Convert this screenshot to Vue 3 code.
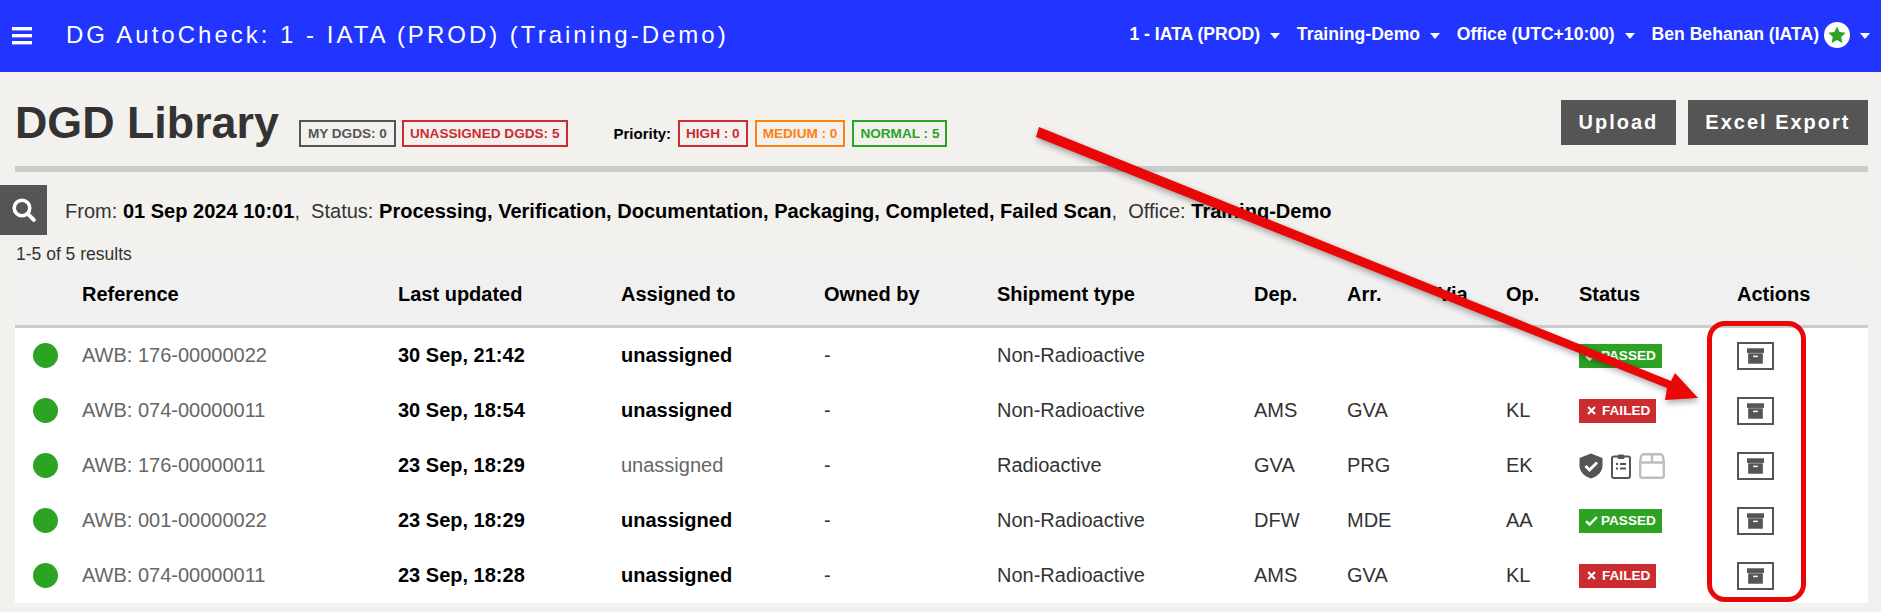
<template>
  <div class="page">
    <header class="topbar">
      <div class="topbar-left">
        <svg class="burger" viewBox="0 0 20 18" width="20" height="18">
          <rect y="0" width="20" height="3.4" fill="#fff" />
          <rect y="7" width="20" height="3.4" fill="#fff" />
          <rect y="14" width="20" height="3.4" fill="#fff" />
        </svg>
        <span class="app-title">DG AutoCheck: 1 - IATA (PROD) (Training-Demo)</span>
      </div>
      <nav class="topnav">
        <span class="nav-item">1 - IATA (PROD)<i class="caret"></i></span>
        <span class="nav-item">Training-Demo<i class="caret"></i></span>
        <span class="nav-item">Office (UTC+10:00)<i class="caret"></i></span>
        <span class="nav-item user">
          Ben Behanan (IATA)
          <svg class="star" viewBox="0 0 26 26" width="26" height="26">
            <circle cx="13" cy="13" r="13" fill="#fff" />
            <path d="M13 4.500l2.600 5.600 6.100.7-4.500 4.200 1.200 6-5.400-3-5.400 3 1.200-6-4.500-4.200 6.100-.7z" fill="#2ca323" />
          </svg>
          <i class="caret"></i>
        </span>
      </nav>
    </header>

    <section class="title-row">
      <div class="title-left">
        <h1>DGD Library</h1>
        <div class="tags">
          <span class="tag grey">MY DGDS: 0</span>
          <span class="tag red">UNASSIGNED DGDS: 5</span>
        </div>
        <div class="tags priority">
          <span class="priority-label">Priority:</span>
          <span class="tag red">HIGH : 0</span>
          <span class="tag orange">MEDIUM : 0</span>
          <span class="tag green">NORMAL : 5</span>
        </div>
      </div>
      <div class="buttons">
        <button class="btn">Upload</button>
        <button class="btn">Excel Export</button>
      </div>
    </section>

    <div class="rule"></div>

    <section class="filter-row">
      <button class="search-btn">
        <svg viewBox="0 0 24 24" width="24" height="24">
          <circle cx="10" cy="10" r="7.800" fill="none" stroke="#fff" stroke-width="3.600" />
          <path d="M15.800 15.800l6 6" stroke="#fff" stroke-width="4" stroke-linecap="round" />
        </svg>
      </button>
      <p class="filters">
        From: <b>01 Sep 2024 10:01</b>,&nbsp; Status: <b>Processing, Verification, Documentation, Packaging, Completed, Failed Scan</b>,&nbsp; Office: <b>Training-Demo</b>
      </p>
    </section>

    <div class="results">1-5 of 5 results</div>

    <table class="dgd-table">
      <colgroup>
        <col v-for="w in colWidths" :key="w.id" :style="{ width: w.px + 'px' }" />
      </colgroup>
      <thead>
        <tr>
          <th></th>
          <th v-for="h in headers" :key="h">{{ h }}</th>
        </tr>
      </thead>
      <tbody>
        <tr v-for="row in rows" :key="row.id">
          <td><span class="dot"></span></td>
          <td class="ref">{{ row.ref }}</td>
          <td><b>{{ row.updated }}</b></td>
          <td>
            <b v-if="row.bold">unassigned</b>
            <span v-else class="muted">unassigned</span>
          </td>
          <td>-</td>
          <td>{{ row.type }}</td>
          <td>{{ row.dep }}</td>
          <td>{{ row.arr }}</td>
          <td></td>
          <td>{{ row.op }}</td>
          <td>
            <span v-if="row.status === 'passed'" class="badge passed">
              <svg viewBox="0 0 12 12" width="13" height="13"><path d="M1 6.500l3.200 3.200L11 2.800" fill="none" stroke="#fff" stroke-width="2.200" /></svg>
              PASSED
            </span>
            <span v-else-if="row.status === 'failed'" class="badge failed">
              <svg viewBox="0 0 10 10" width="9" height="9"><path d="M1.200 1.200l7.600 7.600M8.800 1.200L1.200 8.800" fill="none" stroke="#fff" stroke-width="2.400" /></svg>
              FAILED
            </span>
            <span v-else class="progress">
              <svg viewBox="0 0 24 26" width="24" height="26">
                <path d="M12 0.500L23.500 5v7.500c0 6-4.600 10.800-11.500 13C5.100 23.300.5 18.500.5 12.500V5z" fill="#555" />
                <path d="M6.500 13l4 4 7.500-7.500" fill="none" stroke="#fff" stroke-width="3" />
              </svg>
              <svg viewBox="0 0 20 26" width="20" height="26">
                <rect x="1" y="3.500" width="18" height="21.500" rx="2" fill="none" stroke="#555" stroke-width="2" />
                <rect x="6.500" y="1.500" width="7" height="4.500" rx="1.500" fill="#555" />
                <path d="M5 11h2M9 11h6M5 15.500h2M9 15.500h6" stroke="#555" stroke-width="1.800" />
              </svg>
              <svg viewBox="0 0 26 26" width="26" height="26">
                <path d="M4.500 1.200h17a2.500 2.500 0 0 1 2.300 1.800l1 5.200v14.600a2 2 0 0 1-2 2H3.200a2 2 0 0 1-2-2V8.200l1-5.200a2.500 2.500 0 0 1 2.300-1.800zM1.200 9.500h23.600M13 1.200V9.500" fill="none" stroke="#bdbdbd" stroke-width="2.400" />
              </svg>
            </span>
          </td>
          <td>
            <span class="action-btn">
              <svg viewBox="0 0 22 20" width="22" height="20">
                <rect x="0" y="0" width="22" height="6" fill="#555" />
                <rect x="1.500" y="6.500" width="19" height="13.500" fill="#555" />
                <rect x="8" y="9.500" width="6" height="2" fill="#fff" />
              </svg>
            </span>
          </td>
        </tr>
      </tbody>
    </table>

    <!-- annotation drawn over the screenshot -->
    <div class="highlight-box"></div>
    <svg class="arrow" viewBox="0 0 1881 612" width="1881" height="612">
      <polygon points="1039,127 1671,381 1675,373 1698,398 1665,400 1667,388 1036,137" fill="#e90807" />
    </svg>
  </div>
</template>

<script setup>
const colWidths = [67, 316, 223, 203, 173, 257, 93, 91, 68, 73, 158, 131].map((px, id) => ({ id, px }))

const headers = ['Reference', 'Last updated', 'Assigned to', 'Owned by', 'Shipment type', 'Dep.', 'Arr.', 'Via', 'Op.', 'Status', 'Actions']

const rows = [
  { id: 1, ref: 'AWB: 176-00000022', updated: '30 Sep, 21:42', bold: true, type: 'Non-Radioactive', dep: '', arr: '', op: '', status: 'passed' },
  { id: 2, ref: 'AWB: 074-00000011', updated: '30 Sep, 18:54', bold: true, type: 'Non-Radioactive', dep: 'AMS', arr: 'GVA', op: 'KL', status: 'failed' },
  { id: 3, ref: 'AWB: 176-00000011', updated: '23 Sep, 18:29', bold: false, type: 'Radioactive', dep: 'GVA', arr: 'PRG', op: 'EK', status: 'progress' },
  { id: 4, ref: 'AWB: 001-00000022', updated: '23 Sep, 18:29', bold: true, type: 'Non-Radioactive', dep: 'DFW', arr: 'MDE', op: 'AA', status: 'passed' },
  { id: 5, ref: 'AWB: 074-00000011', updated: '23 Sep, 18:28', bold: true, type: 'Non-Radioactive', dep: 'AMS', arr: 'GVA', op: 'KL', status: 'failed' }
]
</script>

<style>
html, body {
  margin: 0;
  background: #f2f1ee;
  overflow: hidden;
}
</style>

<style scoped>
.page {
  position: relative;
  width: 1881px;
  height: 612px;
  overflow: hidden;
  background: #f2f1ee;
  font-family: "Liberation Sans", Arial, sans-serif;
  color: #333;
}

.topbar {
  height: 72px;
  background: #2135ff;
  color: #fff;
  display: flex;
  align-items: center;
  justify-content: space-between;
  padding: 0 11px 0 12px;
}

.topbar-left {
  display: flex;
  align-items: center;
  gap: 34px;
}

.burger {
  display: block;
}

.app-title {
  font-size: 24px;
  letter-spacing: 3px;
  margin-top: -2px;
}

.topnav {
  display: flex;
  align-items: center;
  gap: 16.800px;
  font-size: 17.600px;
  font-weight: bold;
  margin-top: -3px;
}

.nav-item {
  display: flex;
  align-items: center;
}

.user .star {
  margin-left: 5px;
}

.caret {
  width: 0;
  height: 0;
  margin-left: 10px;
  margin-top: 2px;
  border-left: 5.500px solid transparent;
  border-right: 5.500px solid transparent;
  border-top: 6px solid #fff;
}

.title-row {
  display: flex;
  justify-content: space-between;
  padding: 27px 13px 0 15px;
  height: 67px;
}

.title-left {
  display: flex;
  align-items: flex-start;
}

h1 {
  margin: -1px 0 0;
  font-size: 44.800px;
  line-height: 49px;
  font-weight: bold;
  color: #333;
}

.tags {
  display: flex;
  align-items: center;
  gap: 6px;
  margin: 21px 0 0 20px;
  height: 27px;
}

.priority {
  gap: 7px;
  margin-left: 46px;
}

.priority-label {
  font-size: 15px;
  font-weight: bold;
  color: #000;
}

.tag {
  box-sizing: border-box;
  height: 27px;
  line-height: 23px;
  padding: 0 6px;
  border: 2px solid;
  font-size: 13.600px;
  font-weight: bold;
  white-space: nowrap;
}

.tag.grey { color: #555; border-color: #555; padding: 0 7px; }
.tag.red { color: #cb2c30; border-color: #cb2c30; }
.tag.orange { color: #ff7f0f; border-color: #ff7f0f; }
.tag.green { color: #2ca323; border-color: #2ca323; }

.buttons {
  display: flex;
  gap: 12px;
  margin-top: 1px;
}

.btn {
  height: 45px;
  padding: 0 17.500px;
  border: none;
  background: #555;
  color: #fff;
  font-family: inherit;
  font-size: 20px;
  font-weight: bold;
  letter-spacing: 2px;
}

.rule {
  height: 6px;
  margin: 0 13px 0 15px;
  background: #ccc;
}

.filter-row {
  display: flex;
  align-items: center;
  height: 50px;
  margin-top: 13px;
  gap: 18px;
}

.search-btn {
  width: 47px;
  height: 50px;
  border: none;
  padding: 0;
  background: #555;
  display: flex;
  align-items: center;
  justify-content: center;
}

.filters {
  margin: 2px 0 0;
  font-size: 20.040px;
  color: #333;
  white-space: nowrap;
}

.filters b {
  color: #000;
}

.results {
  margin: 10px 0 0 16px;
  height: 20px;
  font-size: 17.500px;
  line-height: 19px;
}

.dgd-table {
  margin-left: 15px;
  width: 1853px;
  table-layout: fixed;
  border-collapse: collapse;
  background: #fff;
  font-size: 20px;
}

th {
  height: 58px;
  padding: 0 0 2px;
  text-align: left;
  font-weight: bold;
  color: #000;
  background: #f0f0f0;
  border-bottom: 3px solid #ccc;
}

td {
  height: 55px;
  padding: 0;
  color: #333;
}

td b {
  color: #000;
}

.ref,
.muted {
  color: #666;
}

.dot {
  display: block;
  width: 25px;
  height: 25px;
  margin-left: 18px;
  border-radius: 50%;
  background: #2ca323;
}

.badge {
  display: inline-flex;
  align-items: center;
  gap: 3px;
  height: 24px;
  padding: 0 6px;
  font-size: 13.600px;
  font-weight: bold;
  color: #fff;
  vertical-align: middle;
}

.passed { background: #2ca323; }
.failed { background: #cb2c30; padding: 0 6px 0 8px; gap: 6px; }

.progress {
  display: flex;
  align-items: center;
  gap: 8px;
}

.action-btn {
  box-sizing: border-box;
  display: flex;
  align-items: center;
  justify-content: center;
  width: 37px;
  height: 28px;
  border: 2px solid #555;
}

.action-btn svg {
  width: 17px;
  height: 16px;
}

.highlight-box {
  position: absolute;
  left: 1707px;
  top: 321px;
  width: 99px;
  height: 281px;
  box-sizing: border-box;
  border: 5px solid #e90807;
  border-radius: 18px;
}

.arrow {
  position: absolute;
  left: 0;
  top: 0;
  pointer-events: none;
  filter: drop-shadow(1px 3px 3px rgba(0, 0, 0, 0.35));
}
</style>
